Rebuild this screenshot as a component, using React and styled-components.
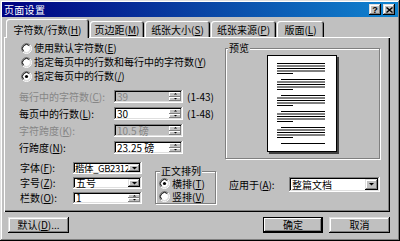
import React from 'react';
import styled, { createGlobalStyle } from 'styled-components';

const GlobalStyle = createGlobalStyle`
  html, body {
    margin: 0;
    padding: 0;
    background: #c0c0c0;
  }
  body {
    font-family: "Noto Sans CJK SC", "Liberation Sans", sans-serif;
    font-size: 10px;
    line-height: 12px;
    color: #000;
  }
  * { box-sizing: border-box; }
  u { text-decoration-thickness: 1px; text-underline-offset: 1px; }
`;

const raised = `
  box-shadow: inset -1px -1px #000, inset 1px 1px #dfdfdf,
    inset -2px -2px #808080, inset 2px 2px #fff;
`;
const sunken = `
  box-shadow: inset -1px -1px #fff, inset 1px 1px #808080,
    inset -2px -2px #dfdfdf, inset 2px 2px #000;
`;

const Window = styled.div`
  width: 400px;
  height: 241px;
  padding: 2px;
  background: #c0c0c0;
  display: flex;
  flex-direction: column;
  ${raised}
`;

const TitleBar = styled.div`
  height: 15px;
  display: flex;
  align-items: center;
  justify-content: space-between;
  padding: 0 3px 0 2px;
  background: linear-gradient(90deg, #000080 0%, #0a4aa8 55%, #1084d0 100%);
  color: #fff;
`;

const TitleText = styled.span`
  font-size: 10px;
  letter-spacing: 0.3px;
`;

const TitleButtons = styled.div`
  display: flex;
  gap: 2px;
`;

const TitleButton = styled.div`
  width: 12px;
  height: 11px;
  display: flex;
  align-items: center;
  justify-content: center;
  background: #c0c0c0;
  color: #000;
  font-family: "Liberation Sans", sans-serif;
  font-weight: 700;
  font-size: 9px;
  ${raised}
`;

const TabRow = styled.div`
  position: relative;
  z-index: 1;
  display: flex;
  align-items: flex-end;
  gap: 1px;
  height: 18px;
  margin-top: 2px;
  padding-left: 4px;
`;

const Tab = styled.div`
  width: ${p => p.$w}px;
  height: ${p => (p.$active ? 19 : 16)}px;
  margin-bottom: ${p => (p.$active ? -1 : 0)}px;
  padding-top: ${p => (p.$active ? 2 : 1)}px;
  display: flex;
  align-items: center;
  justify-content: center;
  white-space: nowrap;
  background: #c0c0c0;
  border-radius: 3px 3px 0 0;
  box-shadow: inset 1px 1px #fff, inset -1px 0 #000, inset -2px 0 #808080;
`;

const Panel = styled.div`
  display: flex;
  width: 386px;
  height: 175px;
  margin-left: 2px;
  background: #c0c0c0;
  box-shadow: inset 1px 1px #fff, inset -1px -1px #000, inset -2px -2px #808080;
`;

const LeftCol = styled.div`
  width: 216px;
  display: flex;
  flex-direction: column;
`;

const RightCol = styled.div`
  flex: 1;
  display: flex;
  flex-direction: column;
`;

const RadioList = styled.div`
  padding: 4px 0 0 17px;
`;

const RadioRow = styled.div`
  display: flex;
  align-items: center;
  gap: 2px;
  height: ${p => p.$h || 14}px;
  white-space: nowrap;
`;

const FieldList = styled.div`
  display: flex;
  flex-direction: column;
  gap: 4px;
  margin-top: 7px;
  padding-left: 15px;
`;

const FieldRow = styled.div`
  display: flex;
  align-items: center;
  height: ${p => p.$h}px;
`;

const Label = styled.div`
  width: ${p => p.$w}px;
  flex-shrink: 0;
  white-space: nowrap;
  color: ${p => (p.$disabled ? '#868686' : '#000')};
`;

const Field = styled.div`
  width: ${p => p.$w}px;
  height: ${p => p.$h}px;
  display: flex;
  align-items: center;
  flex-shrink: 0;
  background: ${p => (p.$disabled ? '#c0c0c0' : '#fff')};
  ${sunken}
`;

const FieldText = styled.div`
  flex: 1;
  min-width: 0;
  white-space: nowrap;
  padding-left: ${p => (p.$tight ? 2 : 3)}px;
  font-size: ${p => (p.$tight ? 9.5 : 10)}px;
  letter-spacing: ${p => (p.$tight ? -0.4 : 0)}px;
  line-height: 12px;
  color: ${p => (p.$disabled ? '#868686' : '#000')};
`;

const SpinBox = styled.div`
  width: 12px;
  align-self: stretch;
  margin: 2px 2px 2px 0;
  display: flex;
  flex-direction: column;
`;

const SpinButton = styled.div`
  flex: 1;
  display: flex;
  align-items: center;
  justify-content: center;
  background: #c0c0c0;
  box-shadow: inset -1px -1px #808080, inset 1px 1px #fff;
`;

const DropButton = styled.div`
  width: ${p => p.$w || 12}px;
  align-self: stretch;
  margin: 2px 2px 2px 0;
  display: flex;
  align-items: center;
  justify-content: center;
  background: #c0c0c0;
  ${raised}
`;

const RangeText = styled.span`
  margin-left: 4px;
  white-space: nowrap;
`;

const BottomArea = styled.div`
  display: flex;
  margin-top: 8px;
  padding-left: 16px;
`;

const FontRows = styled.div`
  display: flex;
  flex-direction: column;
  gap: 3px;
`;

const GroupBox = styled.fieldset`
  margin: ${p => p.$mt}px 0 0 ${p => p.$ml}px;
  padding: 0 ${p => p.$px || 0}px;
  width: ${p => p.$w}px;
  height: ${p => p.$h}px;
  min-width: 0;
  border: 1px solid #808080;
  box-shadow: inset 1px 1px #fff, 1px 1px #fff;
`;

const GroupLegend = styled.legend`
  margin-left: ${p => p.$ml || 2}px;
  padding: 0 1px;
  line-height: 12px;
  background: #c0c0c0;
  white-space: nowrap;
`;

const PreviewBody = styled.div`
  display: flex;
  justify-content: center;
  padding-top: 1px;
`;

const ApplyRow = styled.div`
  display: flex;
  align-items: center;
  margin: 18px 0 0 9px;
`;

const Footer = styled.div`
  display: flex;
  align-items: center;
  margin-top: 5px;
  padding: 0 8px 0 6px;
`;

const Button = styled.div`
  width: ${p => p.$w}px;
  height: 16px;
  display: flex;
  align-items: center;
  justify-content: center;
  margin-left: ${p => p.$ml || 0}px;
  background: #c0c0c0;
  white-space: nowrap;
  ${p =>
    p.$default
      ? `box-shadow: inset 0 0 0 1px #000, inset -2px -2px #000, inset 2px 2px #fff, inset -3px -3px #808080;`
      : raised}
`;

const Spacer = styled.div`
  flex: 1;
`;

const RadioIcon = ({ checked }) => (
  <svg width="11" height="11" viewBox="0 0 11 11">
    <circle cx="5.5" cy="5.5" r="4" fill="#fff" />
    <path d="M1.96 9.04 A5 5 0 0 1 9.04 1.96" stroke="#808080" fill="none" />
    <path d="M9.04 1.96 A5 5 0 0 1 1.96 9.04" stroke="#fff" fill="none" />
    <path d="M2.67 8.33 A4 4 0 0 1 8.33 2.67" stroke="#000" fill="none" />
    <path d="M8.33 2.67 A4 4 0 0 1 2.67 8.33" stroke="#dfdfdf" fill="none" />
    {checked && <circle cx="5.5" cy="5.5" r="1.6" fill="#000" />}
  </svg>
);

const Radio = ({ checked, children, h }) => (
  <RadioRow $h={h}>
    <RadioIcon checked={checked} />
    <span>{children}</span>
  </RadioRow>
);

const Arrow = ({ dir = 'down', size = 5 }) => (
  <svg width={size} height={Math.ceil(size / 2)} viewBox={`0 0 ${size} ${Math.ceil(size / 2)}`}>
    {dir === 'down' ? (
      <path d={`M0 0 H${size} L${size / 2} ${size / 2} Z`} fill="#000" />
    ) : (
      <path d={`M0 ${size / 2} H${size} L${size / 2} 0 Z`} fill="#000" />
    )}
  </svg>
);

const CloseGlyph = () => (
  <svg width="7" height="6" viewBox="0 0 7 6">
    <path d="M0.5 0.5 L6.5 5.5 M6.5 0.5 L0.5 5.5" stroke="#000" strokeWidth="1.4" />
  </svg>
);

const SpinField = ({ value, disabled, w = 69, h = 13 }) => (
  <Field $w={w} $h={h} $disabled={disabled}>
    <FieldText $disabled={disabled}>{value}</FieldText>
    <SpinBox>
      <SpinButton><Arrow dir="up" size={3} /></SpinButton>
      <SpinButton><Arrow dir="down" size={3} /></SpinButton>
    </SpinBox>
  </Field>
);

const ComboField = ({ value, w = 69, h = 12, btn = 12, tight }) => (
  <Field $w={w} $h={h}>
    <FieldText $tight={tight}>{value}</FieldText>
    <DropButton $w={btn}><Arrow size={5} /></DropButton>
  </Field>
);

// paragraph layout of the little page drawing
const paragraphs = [
  { y: 8.5, lines: 5, indent: false },
  { y: 24.5, lines: 5, indent: true },
  { y: 40.5, lines: 5, indent: true },
  { y: 56.5, lines: 5, indent: true },
  { y: 72.5, lines: 5, indent: true },
  { y: 88.5, lines: 1, indent: true },
];

const PagePreview = () => (
  <svg width="72" height="99" viewBox="0 0 72 99">
    <rect x="2" y="2" width="70" height="97" fill="#404040" />
    <rect x="0.5" y="0.5" width="69" height="96" fill="#fff" stroke="#000" />
    {paragraphs.map(p =>
      Array.from({ length: p.lines }).map((_, i) => {
        const y = p.y + i * 2.5;
        const last = i === 4;
        const x1 = i === 0 && p.indent ? 14 : 10;
        const x2 = last ? 26 : 58;
        return <line key={`${p.y}-${i}`} x1={x1} x2={x2} y1={y} y2={y} stroke="#000" strokeWidth="1" />;
      })
    )}
  </svg>
);

const tabs = [
  { w: 83, label: <>字符数/行数(<u>H</u>)</>, active: true },
  { w: 54, label: <>页边距(<u>M</u>)</> },
  { w: 65, label: <>纸张大小(<u>S</u>)</> },
  { w: 65, label: <>纸张来源(<u>P</u>)</> },
  { w: 47, label: <>版面(<u>L</u>)</> },
];

const gridFields = [
  { label: <>每行中的字符数(<u>C</u>):</>, value: '39', range: '(1-43)', disabled: true },
  { label: <>每页中的行数(<u>L</u>):</>, value: '30', range: '(1-48)' },
  { label: <>字符跨度(<u>K</u>):</>, value: '10.5 磅', disabled: true },
  { label: <>行跨度(<u>N</u>):</>, value: '23.25 磅' },
];

const App = () => (
  <>
    <GlobalStyle />
    <Window>
      <TitleBar>
        <TitleText>页面设置</TitleText>
        <TitleButtons>
          <TitleButton>?</TitleButton>
          <TitleButton><CloseGlyph /></TitleButton>
        </TitleButtons>
      </TitleBar>

      <TabRow>
        {tabs.map((t, i) => (
          <Tab key={i} $w={t.w} $active={t.active}>{t.label}</Tab>
        ))}
      </TabRow>

      <Panel>
        <LeftCol>
          <RadioList>
            <Radio>使用默认字符数(<u>E</u>)</Radio>
            <Radio>指定每页中的行数和每行中的字符数(<u>Y</u>)</Radio>
            <Radio checked>指定每页中的行数(<u>/</u>)</Radio>
          </RadioList>

          <FieldList>
            {gridFields.map((f, i) => (
              <FieldRow key={i} $h={13}>
                <Label $w={95} $disabled={f.disabled}>{f.label}</Label>
                <SpinField value={f.value} disabled={f.disabled} />
                {f.range && <RangeText>{f.range}</RangeText>}
              </FieldRow>
            ))}
          </FieldList>

          <BottomArea>
            <FontRows>
              <FieldRow $h={12}>
                <Label $w={53}>字体(<u>F</u>):</Label>
                <ComboField value="楷体_GB2312" tight />
              </FieldRow>
              <FieldRow $h={12}>
                <Label $w={53}>字号(<u>Z</u>):</Label>
                <ComboField value="五号" />
              </FieldRow>
              <FieldRow $h={12}>
                <Label $w={53}>栏数(<u>O</u>):</Label>
                <SpinField value="1" h={12} />
              </FieldRow>
            </FontRows>
            <GroupBox $mt={3} $ml={13} $w={61} $h={39} $px={3}>
              <GroupLegend $ml={1}>正文排列</GroupLegend>
              <Radio checked h={13}>横排(<u>T</u>)</Radio>
              <Radio h={13}>竖排(<u>V</u>)</Radio>
            </GroupBox>
          </BottomArea>
        </LeftCol>

        <RightCol>
          <GroupBox $mt={5} $ml={5} $w={155} $h={117}>
            <GroupLegend $ml={2}>预览</GroupLegend>
            <PreviewBody>
              <PagePreview />
            </PreviewBody>
          </GroupBox>
          <ApplyRow>
            <Label $w={60}>应用于(<u>A</u>):</Label>
            <ComboField value="整篇文档" w={91} h={15} btn={13} />
          </ApplyRow>
        </RightCol>
      </Panel>

      <Footer>
        <Button $w={61}>默认(<u>D</u>)...</Button>
        <Spacer />
        <Button $w={60} $default>确定</Button>
        <Button $w={61} $ml={6}>取消</Button>
      </Footer>
    </Window>
  </>
);

export default App;
